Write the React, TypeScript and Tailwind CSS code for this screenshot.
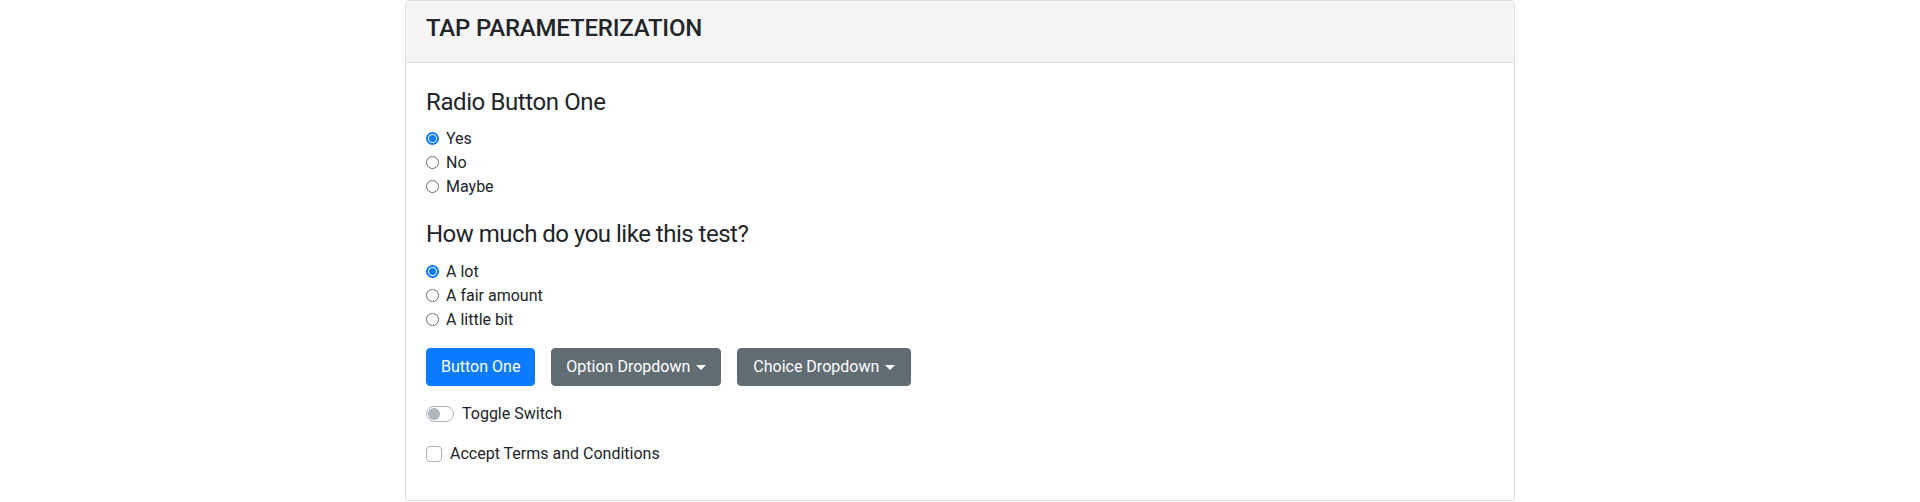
import React from "react";

function Radio({ label, checked }: { label: string; checked?: boolean }) {
  return (
    <div className="relative flex h-6 items-center pl-5">
      <span className="absolute left-0 top-[5px] flex h-[13px] w-[13px] items-center justify-center">
        {checked ? (
          <span className="flex h-[13px] w-[13px] items-center justify-center rounded-full border-[2px] border-[#0a7bff] bg-white">
            <span className="h-[7px] w-[7px] rounded-full bg-[#0a7bff]" />
          </span>
        ) : (
          <span className="h-[13px] w-[13px] rounded-full border border-[#6e6e6e] bg-white" />
        )}
      </span>
      <span className="leading-6">{label}</span>
    </div>
  );
}

function Caret() {
  return (
    <span className="ml-[6px] inline-block h-0 w-0 border-x-[5px] border-t-[5px] border-x-transparent border-t-white align-middle" />
  );
}

export default function App() {
  return (
    <div
      className="min-h-[502px] w-full bg-white text-[#212529]"
      style={{ fontFamily: "Roboto, 'Liberation Sans', Arial, sans-serif" }}
    >
      <div className="mx-auto w-[1110px] rounded-[4px] border border-[#dfdfdf]">
        <div className="border-b border-[#dfdfdf] bg-[#f5f5f5] px-5 pt-[13px] pb-[11px]">
          <h4 className="mb-2 text-[24px] font-medium leading-[1.2] tracking-[-0.2px]">TAP PARAMETERIZATION</h4>
        </div>
        <div className="flex flex-col px-5 pt-5 pb-5 text-[16px] leading-6">
          <div className="mb-[18px] flex flex-col">
            <h4 className="mt-[5px] mb-[10px] text-[24px] font-normal leading-[1.2] tracking-[-0.4px]">Radio Button One</h4>
            <Radio label="Yes" checked />
            <Radio label="No" />
            <Radio label="Maybe" />
          </div>
          <div className="mb-4 flex flex-col">
            <h4 className="mt-[3px] mb-[12px] text-[24px] font-normal leading-[1.2] tracking-[-0.5px]">How much do you like this test?</h4>
            <Radio label="A lot" checked />
            <Radio label="A fair amount" />
            <Radio label="A little bit" />
          </div>
          <div className="mb-4 flex gap-4">
            <button className="h-[38px] rounded-[4px] border border-[#0a7bff] bg-[#0a7bff] px-[14px] text-[16px] leading-6 text-white">
              Button One
            </button>
            <button className="flex h-[38px] items-center rounded-[4px] border border-[#626c73] bg-[#626c73] px-[14px] text-[16px] leading-6 text-white">
              Option Dropdown
              <Caret />
            </button>
            <button className="flex h-[38px] items-center rounded-[4px] border border-[#626c73] bg-[#626c73] px-[15px] text-[16px] leading-6 text-white">
              Choice Dropdown
              <Caret />
            </button>
          </div>
          <div className="relative mb-4 flex h-6 items-center pl-9">
            <span className="absolute left-0 top-1 h-4 w-7 rounded-full border border-[#adb5bd] bg-white">
              <span className="absolute left-[1px] top-[1px] h-3 w-3 rounded-full bg-[#adb5bd]" />
            </span>
            <span>Toggle Switch</span>
          </div>
          <div className="relative mb-[14px] flex h-6 items-center pl-6">
            <span className="absolute left-0 top-1 h-4 w-4 rounded-[4px] border border-[#adb5bd] bg-white" />
            <span>Accept Terms and Conditions</span>
          </div>
        </div>
      </div>
    </div>
  );
}
